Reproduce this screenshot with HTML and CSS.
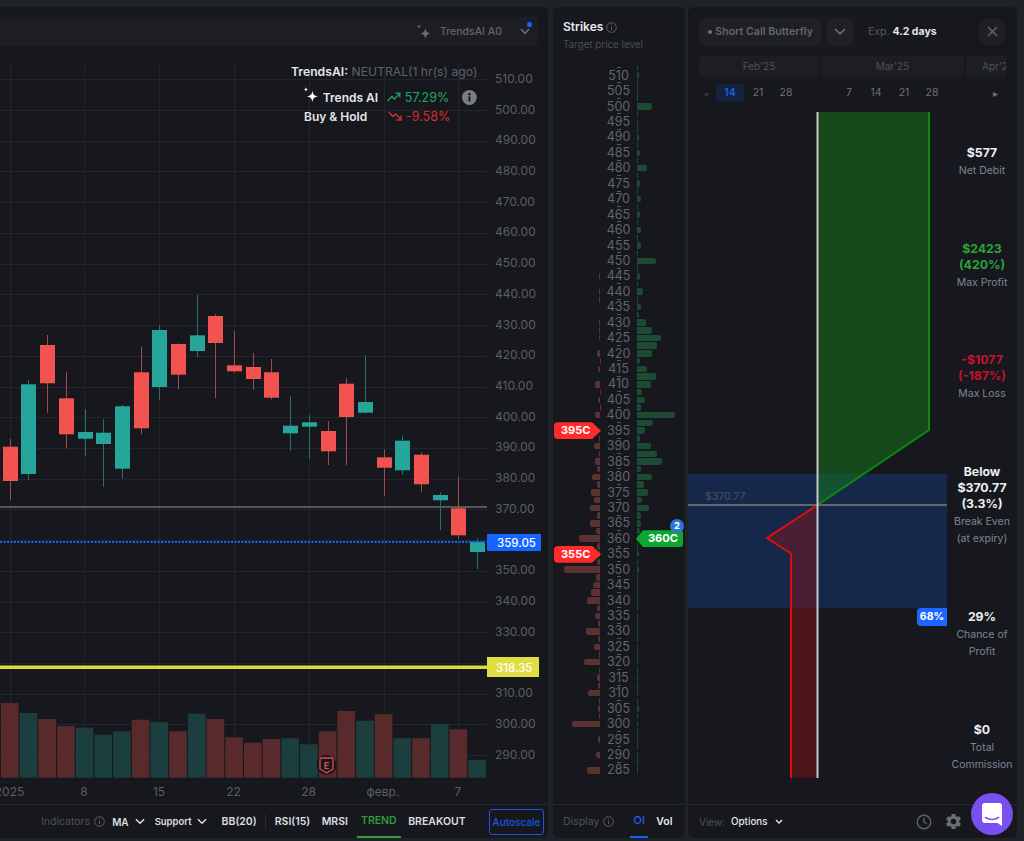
FILE: index.html
```html
<!DOCTYPE html>
<html lang="en">
<head>
    <meta charset="UTF-8">
    <meta name="viewport" content="width=device-width, initial-scale=1.0">
    <title>Options Chart</title>
    <link rel="stylesheet" href="styles.css">
</head>
<body>
    <section class="chart-panel">
        <div class="chart-top">
            <svg class="top-spark" width="16" height="16" viewBox="0 0 16 16"><path d="M9.5 3.5C10 7.5 11 9 15.5 9.5 11 10 10 11.5 9.5 15.5 9 11.5 8 10 3.5 9.5 8 9 9 7.5 9.5 3.5Z"/><path d="M3 0C3.2 1.7 3.6 2.2 5.4 2.5 3.6 2.8 3.2 3.3 3 5 2.8 3.3 2.4 2.8.6 2.5 2.4 2.2 2.8 1.7 3 0Z"/></svg>
            <span class="top-name">TrendsAI A0</span>
            <span class="top-chevron">
                <svg width="10" height="7" viewBox="0 0 10 7"><polyline points="1,1 5,5.5 9,1"/></svg>
                <i class="blue-dot"></i>
            </span>
        </div>
        <div class="chart-area">
            <svg id="chart" class="chart-svg" width="548" height="758" viewBox="0 46 548 758"></svg>
            <div class="legend">
                <p class="legend-title"><strong>TrendsAI:</strong> NEUTRAL(1 hr(s) ago)</p>
                <div class="legend-row">
                    <svg class="legend-spark" width="16" height="16" viewBox="0 0 16 16"><path d="M9.5 3.5C10 7.5 11 9 15.5 9.5 11 10 10 11.5 9.5 15.5 9 11.5 8 10 3.5 9.5 8 9 9 7.5 9.5 3.5Z"/><path d="M3 0C3.2 1.7 3.6 2.2 5.4 2.5 3.6 2.8 3.2 3.3 3 5 2.8 3.3 2.4 2.8.6 2.5 2.4 2.2 2.8 1.7 3 0Z"/></svg>
                    <span class="legend-name">Trends AI</span>
                    <svg class="legend-arrow up" width="14" height="10" viewBox="0 0 14 10"><polyline points="0.5,9 5,4.5 7.5,7 13,1.5"/><polyline points="8.5,1 13,1 13,5.5"/></svg>
                    <span class="legend-pct up">57.29%</span>
                    <svg class="legend-info" width="15" height="15" viewBox="0 0 15 15"><circle cx="7.5" cy="7.5" r="7.5" fill="#7b7d85"/><circle cx="7.5" cy="4.2" r="1.2" fill="#16181d"/><rect x="6.5" y="6.3" width="2" height="5.2" fill="#16181d"/></svg>
                </div>
                <div class="legend-row second">
                    <span class="legend-name hold">Buy &amp; Hold</span>
                    <svg class="legend-arrow down" width="14" height="10" viewBox="0 0 14 10"><polyline points="0.5,1 5,5.5 7.5,3 13,8.5"/><polyline points="8.5,9 13,9 13,4.5"/></svg>
                    <span class="legend-pct down">-9.58%</span>
                </div>
            </div>
        </div>
        <div class="chart-bottom">
            <span class="muted">Indicators</span>
            <svg class="info-line ind-info" width="11" height="11" viewBox="0 0 11 11"><circle cx="5.5" cy="5.5" r="4.8"/><line x1="5.5" y1="5" x2="5.5" y2="8.2"/><line x1="5.5" y1="2.8" x2="5.5" y2="3.8"/></svg>
            <span class="ind ind-ma">MA</span>
            <svg class="chev" width="10" height="7" viewBox="0 0 11 7"><polyline points="1,1 5.5,5.5 10,1"/></svg>
            <span class="ind ind-support">Support</span>
            <svg class="chev" width="10" height="7" viewBox="0 0 11 7"><polyline points="1,1 5.5,5.5 10,1"/></svg>
            <span class="ind ind-bb">BB(20)</span>
            <i class="ind-divider"></i>
            <span class="ind ind-rsi">RSI(15)</span>
            <span class="ind ind-mrsi">MRSI</span>
            <span class="ind ind-trend">TREND</span>
            <span class="ind ind-breakout">BREAKOUT</span>
            <button class="autoscale">Autoscale</button>
        </div>
    </section>

    <section class="strikes-panel">
        <div class="strikes-head">
            <h3>Strikes <svg class="info-line" width="11" height="11" viewBox="0 0 11 11"><circle cx="5.5" cy="5.5" r="4.8"/><line x1="5.5" y1="5" x2="5.5" y2="8.2"/><line x1="5.5" y1="2.8" x2="5.5" y2="3.8"/></svg></h3>
            <p>Target price level</p>
        </div>
        <div id="strikeList" class="strike-list"></div>
        <div class="strikes-foot">
            <span class="muted">Display</span>
            <svg class="info-line" width="11" height="11" viewBox="0 0 11 11"><circle cx="5.5" cy="5.5" r="4.8"/><line x1="5.5" y1="5" x2="5.5" y2="8.2"/><line x1="5.5" y1="2.8" x2="5.5" y2="3.8"/></svg>
            <span class="foot-oi">OI</span>
            <span class="foot-vol">Vol</span>
        </div>
    </section>

    <section class="trade-panel">
        <div class="trade-head">
            <div class="strategy-btn"><i class="strategy-dot"></i>Short Call Butterfly</div>
            <div class="chevron-btn"><svg width="12" height="8" viewBox="0 0 12 8"><polyline points="1,1 6,6 11,1"/></svg></div>
            <span class="exp-label">Exp.</span>
            <span class="exp-value">4.2 days</span>
            <div class="close-btn"><svg width="11" height="11" viewBox="0 0 11 11"><line x1="1" y1="1" x2="10" y2="10"/><line x1="10" y1="1" x2="1" y2="10"/></svg></div>
        </div>
        <div class="months">
            <div class="month feb">Feb'25</div>
            <div class="month mar">Mar'25</div>
            <div class="month apr">Apr'25</div>
        </div>
        <div class="dates">
            <span class="date-arrow">&#9666;</span>
            <span class="date active">14</span>
            <span class="date">21</span>
            <span class="date">28</span>
            <span class="date date-gap">7</span>
            <span class="date">14</span>
            <span class="date">21</span>
            <span class="date">28</span>
            <span class="date-arrow next">&#9656;</span>
        </div>
        <div class="trade-body">
            <div class="payoff">
                <svg width="259" height="666" viewBox="688 112 259 666">
                    <rect x="688" y="474" width="259" height="134" fill="#16284a"/>
                    <polygon points="817.5,505 929,430 929,112 817.5,112" fill="rgba(20,130,25,0.45)"/>
                    <polygon points="817.5,505 767,538 791,553.5 791,778 817.5,778" fill="rgba(160,16,16,0.38)"/>
                    <polyline points="817.5,505 929,430 929,112" fill="none" stroke="#0a8c0a" stroke-width="2"/>
                    <polyline points="817.5,505 767,538 791,553.5 791,778" fill="none" stroke="#e00c0c" stroke-width="2"/>
                    <line x1="688" y1="505" x2="947" y2="505" stroke="#64666e" stroke-width="2"/>
                    <line x1="817.5" y1="112" x2="817.5" y2="778" stroke="#c8c8cc" stroke-width="2"/>
                    <text x="705" y="500" class="payoff-price">$370.77</text>
                </svg>
                <span class="prob-badge">68%</span>
            </div>
            <div class="stats">
                <div class="stat"><b>$577</b><span>Net Debit</span></div>
                <div class="stat"><b class="gain">$2423<br>(420%)</b><span>Max Profit</span></div>
                <div class="stat"><b class="loss">-$1077<br>(-187%)</b><span>Max Loss</span></div>
                <div class="stat"><b>Below<br>$370.77<br>(3.3%)</b><span>Break Even<br>(at expiry)</span></div>
                <div class="stat"><b>29%</b><span>Chance of<br>Profit</span></div>
                <div class="stat"><b>$0</b><span>Total<br>Commission</span></div>
            </div>
        </div>
        <div class="trade-foot">
            <span class="muted">View:</span>
            <span class="view-value">Options</span>
            <svg class="view-chev" width="8" height="5" viewBox="0 0 8 5"><polyline points="1,1 4,4 7,1"/></svg>
            <svg class="clock" width="16" height="16" viewBox="0 0 16 16"><circle cx="8" cy="8" r="6.8"/><polyline points="8,4 8,8 11,10"/></svg>
            <svg class="gear" width="19" height="19" viewBox="0 0 24 24"><path d="M19.14 12.94c.04-.3.06-.61.06-.94 0-.32-.02-.64-.07-.94l2.03-1.58c.18-.14.23-.41.12-.61l-1.92-3.32c-.12-.22-.37-.29-.59-.22l-2.39.96c-.5-.38-1.03-.7-1.62-.94l-.36-2.54c-.04-.24-.24-.41-.48-.41h-3.84c-.24 0-.43.17-.47.41l-.36 2.54c-.59.24-1.13.57-1.62.94l-2.39-.96c-.22-.08-.47 0-.59.22L2.74 8.87c-.12.21-.08.47.12.61l2.03 1.58c-.05.3-.09.63-.09.94s.02.64.07.94l-2.03 1.58c-.18.14-.23.41-.12.61l1.92 3.32c.12.22.37.29.59.22l2.39-.96c.5.38 1.03.7 1.62.94l.36 2.54c.05.24.24.41.48.41h3.84c.24 0 .44-.17.47-.41l.36-2.54c.59-.24 1.13-.56 1.62-.94l2.39.96c.22.08.47 0 .59-.22l1.92-3.32c.12-.22.07-.47-.12-.61l-2.01-1.58zM12 15.6c-1.98 0-3.6-1.62-3.6-3.6s1.62-3.6 3.6-3.6 3.6 1.62 3.6 3.6-1.62 3.6-3.6 3.6z"/></svg>
        </div>
    </section>

    <div class="chat-launcher">
        <svg width="20" height="23" viewBox="0 0 20 23"><path d="M3 0H17A3 3 0 0 1 20 3V23L15.5 20H3A3 3 0 0 1 0 17V3A3 3 0 0 1 3 0Z" fill="#fff"/><path d="M3.5 14.5C7.5 17 12.5 17 16.5 14.5" fill="none" stroke="#7a4ff0" stroke-width="1.6" stroke-linecap="round"/></svg>
    </div>

    <script src="app.js"></script>
</body>
</html>
```
FILE: styles.css
```css
* {
    box-sizing: border-box;
}

body {
    margin: 0;
    width: 1024px;
    height: 841px;
    padding: 7px 0 3px 0;
    display: flex;
    overflow: hidden;
    background: #1f2229;
    font-family: Inter, "Liberation Sans", sans-serif;
    color: #e8e9ec;
}

p, h3 {
    margin: 0;
}

.muted {
    color: #4f525a;
    font-size: 10.5px;
}

.info-line {
    fill: none;
    stroke: #5f626a;
    stroke-width: 1;
}

/* chart */
.chart-panel {
    width: 548px;
    margin-right: 5px;
    display: flex;
    flex-direction: column;
    background: #16181d;
    border-radius: 0 6px 6px 0;
}

.chart-top {
    flex: none;
    width: 538px;
    height: 29px;
    margin-top: 10px;
    padding-right: 8px;
    display: flex;
    align-items: center;
    justify-content: flex-end;
    background: #1c1e23;
    border-radius: 0 5px 5px 0;
}

.top-spark {
    fill: #6a6d74;
    margin-right: 8px;
}

.top-name {
    color: #62656c;
    font-size: 10.5px;
    font-weight: 500;
    margin-right: 18px;
}

.top-chevron {
    position: relative;
    width: 10px;
    height: 7px;
    display: flex;
}

.top-chevron polyline {
    fill: none;
    stroke: #70737a;
    stroke-width: 1.4;
}

.blue-dot {
    position: absolute;
    top: -6px;
    right: -2px;
    width: 5px;
    height: 5px;
    border-radius: 50%;
    background: #1565ff;
}

.chart-area {
    flex: none;
    position: relative;
    height: 758px;
}

.chart-svg {
    display: block;
}

.axis-text {
    fill: #5c5f66;
    font-size: 12px;
    font-family: Inter, "Liberation Sans", sans-serif;
}

.price-tag {
    fill: #fff;
    font-size: 11.5px;
    font-weight: 500;
    font-family: Inter, "Liberation Sans", sans-serif;
}

.earn-text {
    fill: #e5484d;
    font-size: 9px;
    font-weight: 700;
    font-family: Inter, "Liberation Sans", sans-serif;
}

.legend {
    position: absolute;
    top: 17px;
    left: 291px;
    width: 186px;
}

.legend-title {
    height: 18px;
    line-height: 18px;
    font-size: 12.2px;
    color: #5f6269;
    text-align: right;
    white-space: nowrap;
}

.legend-title strong {
    color: #e6e7ea;
    font-weight: 600;
}

.legend-row {
    display: flex;
    align-items: center;
    height: 18px;
    margin-top: 7px;
    padding-left: 13px;
    position: relative;
}

.legend-row.second {
    margin-top: 1px;
}

.legend-spark {
    fill: #fff;
    margin-left: -1px;
    margin-right: 4px;
    margin-top: -4px;
}

.legend-name {
    width: 64px;
    font-size: 12px;
    font-weight: 600;
    color: #e6e7ea;
    white-space: nowrap;
}

.legend-name.hold {
    width: 83px;
}

.legend-arrow {
    fill: none;
    stroke-width: 1.3;
    margin-right: 4px;
    margin-left: 1px;
}

.legend-arrow.up {
    stroke: #1fa863;
}

.legend-arrow.down {
    stroke: #e02b2b;
}

.legend-pct {
    font-size: 12.5px;
}

.legend-pct.up {
    color: #1fa863;
}

.legend-pct.down {
    color: #d92b2b;
}

.legend-info {
    margin-left: 13px;
}

.chart-bottom {
    flex: 1;
    min-height: 0;
    padding-left: 41px;
    display: flex;
    align-items: center;
    font-size: 10.5px;
    border-top: 1px solid #262931;
}

.ind {
    font-weight: 600;
    color: #dcdee2;
    white-space: nowrap;
}

.ind-info {
    margin-left: 4px;
}

.ind-ma {
    margin-left: 7px;
    margin-right: 6px;
    font-size: 10px;
}

.ind-support {
    margin-left: 10px;
    margin-right: 5px;
    font-size: 9.5px;
}

.ind-bb {
    margin-left: 15px;
}

.chev {
    fill: none;
    stroke: #dcdee2;
    stroke-width: 1.6;
}

.ind-divider {
    width: 1px;
    height: 16px;
    margin-left: 8px;
    background: #2a2d34;
}

.ind-rsi {
    margin-left: 9px;
}

.ind-mrsi {
    margin-left: 11.5px;
}

.ind-trend {
    margin-left: 9px;
    align-self: stretch;
    padding: 0 4px;
    line-height: 31px;
    color: #35993f;
    border-bottom: 2px solid #35993f;
}

.ind-breakout {
    margin-left: 7.5px;
}

.autoscale {
    width: 55px;
    height: 26px;
    margin-left: auto;
    margin-right: 4px;
    padding: 0;
    background: transparent;
    border: 1px solid #1a55e0;
    border-radius: 3px;
    color: #1a55e0;
    font-family: inherit;
    font-size: 10px;
    font-weight: 500;
}

/* strikes */
.strikes-panel {
    width: 132px;
    margin-right: 3px;
    display: flex;
    flex-direction: column;
    background: #16181d;
    border-radius: 6px;
}

.strikes-head {
    flex: none;
    height: 57px;
    padding: 13px 0 0 10px;
}

.strikes-head h3 {
    display: flex;
    align-items: center;
    gap: 3px;
    font-size: 12px;
    line-height: 14px;
    font-weight: 600;
    color: #e8e9ec;
}

.strikes-head p {
    margin-top: 4px;
    font-size: 9.8px;
    line-height: 13px;
    color: #4a4e57;
}

.strike-list {
    flex: none;
    height: 740px;
}

.strike-row {
    display: grid;
    grid-template-columns: 47px 37px 48px;
    height: 7.72px;
    position: relative;
}

.put-cell {
    display: flex;
    justify-content: flex-end;
    align-items: center;
}

.call-cell {
    display: flex;
    align-items: center;
}

.put-bar, .call-bar {
    display: block;
    height: 6.5px;
}

.put-bar {
    background: #5a3230;
    border-radius: 2px 0 0 2px;
}

.call-bar {
    background: #1c4a33;
    border-radius: 0 2px 2px 0;
}

.strike-label {
    text-align: center;
    font-size: 12.5px;
    line-height: 7.7px;
    color: #62656c;
}

.strike-dash {
    width: 4px;
    height: 1px;
    margin: 3px auto 0;
    background: #585b62;
}

.tag {
    position: absolute;
    top: -4.6px;
    height: 17px;
    line-height: 17px;
    font-size: 11px;
    font-weight: 700;
    color: #fff;
    z-index: 2;
}

.tag.put {
    left: 1px;
    width: 47px;
    padding-left: 7px;
    background: #ff2a2a;
    border-radius: 4px 0 0 4px;
    clip-path: polygon(0 0, 38px 0, 100% 50%, 38px 100%, 0 100%);
}

.tag.call {
    left: 83px;
    width: 47px;
    padding-left: 12px;
    background: #0aa82e;
    border-radius: 0 3px 3px 0;
    clip-path: polygon(7px 0, 100% 0, 100% 100%, 7px 100%, 0 50%);
}

.tag-count {
    position: absolute;
    top: -15.5px;
    left: 117px;
    width: 14px;
    height: 14px;
    line-height: 14px;
    text-align: center;
    border-radius: 50%;
    background: #2b75d6;
    color: #fff;
    font-size: 9.5px;
    font-weight: 700;
    z-index: 3;
}

.strikes-foot {
    flex: 1;
    min-height: 0;
    display: flex;
    align-items: center;
    padding-left: 10px;
    border-top: 1px solid #262931;
}

.strikes-foot .info-line {
    margin-left: 4px;
}

.foot-oi {
    margin-left: 16px;
    width: 18px;
    align-self: stretch;
    line-height: 31px;
    text-align: center;
    font-size: 11px;
    font-weight: 500;
    color: #1f5fe8;
    border-bottom: 2px solid #1f5fe8;
}

.foot-vol {
    margin-left: 8px;
    font-size: 10.5px;
    font-weight: 600;
    color: #e8e9ec;
}

/* trade */
.trade-panel {
    width: 329px;
    display: flex;
    flex-direction: column;
    background: #16181d;
    border-radius: 6px;
}

.trade-head {
    flex: none;
    height: 29px;
    margin-top: 10px;
    padding: 0 11px;
    display: flex;
    align-items: center;
}

.strategy-btn {
    width: 123px;
    height: 28px;
    display: flex;
    align-items: center;
    padding-left: 9px;
    border-radius: 6px;
    background: #1e2025;
    color: #62656c;
    font-size: 10.7px;
    font-weight: 600;
    white-space: nowrap;
}

.strategy-dot {
    width: 4px;
    height: 4px;
    margin-right: 3px;
    border-radius: 50%;
    background: #6e7178;
}

.chevron-btn, .close-btn {
    width: 28px;
    height: 28px;
    display: flex;
    align-items: center;
    justify-content: center;
    background: #1e2025;
}

.chevron-btn {
    margin-left: 4px;
    border-radius: 6px;
}

.chevron-btn polyline {
    fill: none;
    stroke: #6f7279;
    stroke-width: 1.5;
}

.exp-label {
    margin-left: 14px;
    color: #55585f;
    font-size: 10.5px;
}

.exp-value {
    margin-left: 3px;
    font-size: 10.5px;
    font-weight: 700;
    color: #e4e6ea;
}

.close-btn {
    margin-left: auto;
    border-radius: 50%;
}

.close-btn line {
    stroke: #62656c;
    stroke-width: 1.4;
}

.months {
    flex: none;
    display: flex;
    gap: 2px;
    width: 307px;
    height: 21px;
    margin: 10px 0 0 11px;
    overflow: hidden;
}

.month {
    flex: none;
    height: 21px;
    line-height: 21px;
    text-align: center;
    font-size: 10px;
    color: #4f525a;
    background: #1c1e23;
    border-radius: 3px;
}

.month.feb {
    width: 120px;
}

.month.mar {
    width: 143px;
}

.month.apr {
    width: 60px;
    text-align: left;
    padding-left: 16px;
}

.dates {
    flex: none;
    display: flex;
    align-items: center;
    height: 18px;
    margin-top: 7px;
    padding-left: 28px;
    position: relative;
    font-size: 10.5px;
    color: #6d7077;
}

.date {
    width: 28px;
    height: 18px;
    line-height: 18px;
    text-align: center;
}

.date.active {
    background: #142240;
    color: #1f5fe8;
    font-weight: 600;
    border-radius: 3px;
}

.date-gap {
    margin-left: 36px;
    width: 26px;
}

.date-arrow {
    position: absolute;
    left: 15px;
    font-size: 10px;
    color: #33363c;
}

.date-arrow.next {
    left: 305px;
    color: #6d7077;
}

.trade-body {
    flex: none;
    display: flex;
    height: 692px;
    margin-top: 10px;
}

.payoff {
    position: relative;
    width: 259px;
}

.payoff svg {
    display: block;
}

.payoff-price {
    fill: #4f525a;
    font-size: 10.5px;
    font-family: Inter, "Liberation Sans", sans-serif;
}

.prob-badge {
    position: absolute;
    top: 496px;
    right: 0;
    width: 30px;
    height: 18px;
    line-height: 18px;
    text-align: center;
    background: #1a66ff;
    border-radius: 4px 0 0 4px;
    color: #fff;
    font-size: 10.5px;
    font-weight: 700;
}

.stats {
    width: 70px;
    padding-top: 33px;
    display: flex;
    flex-direction: column;
    gap: 61px;
    text-align: center;
}

.stat b {
    display: block;
    font-size: 12.3px;
    line-height: 16px;
    font-weight: 700;
    color: #eceef1;
}

.stat b.gain {
    color: #2ba33a;
}

.stat b.loss {
    color: #c4122f;
}

.stat span {
    display: block;
    margin-top: 1px;
    font-size: 10.5px;
    line-height: 17.5px;
    color: #7f8596;
    white-space: nowrap;
}

.trade-foot {
    flex: 1;
    min-height: 0;
    display: flex;
    align-items: center;
    padding-left: 11px;
    border-top: 1px solid #262931;
}

.trade-foot .muted {
    font-size: 10px;
}

.view-value {
    margin-left: 6px;
    font-size: 9.8px;
    font-weight: 500;
    color: #e4e6ea;
}

.view-chev {
    margin-left: 7px;
    fill: none;
    stroke: #e4e6ea;
    stroke-width: 1.4;
}

.clock {
    margin-left: 133px;
    fill: none;
    stroke: #5f626a;
    stroke-width: 1.4;
}

.gear {
    margin-left: 12px;
    fill: #6a6d74;
}

.chat-launcher {
    position: fixed;
    left: 971px;
    top: 793px;
    width: 42px;
    height: 42px;
    display: flex;
    align-items: center;
    justify-content: center;
    border-radius: 50%;
    background: #7a4ff0;
}
```
FILE: app.js
```js
const NS = "http://www.w3.org/2000/svg";
const chart = document.getElementById("chart");

function add(tag, attrs, text) {
    const el = document.createElementNS(NS, tag);
    for (const k in attrs) el.setAttribute(k, attrs[k]);
    if (text) el.textContent = text;
    chart.appendChild(el);
    return el;
}

function priceY(p) {
    return 79.3 + (510 - p) * 3.072;
}

// grid
for (let p = 510; p >= 290; p -= 10) {
    const y = Math.round(priceY(p)) + 0.5;
    add("line", { x1: 0, x2: 487, y1: y, y2: y, stroke: "#22252b" });
    if (p !== 360 && p !== 320) {
        add("text", { x: 495, y: priceY(p) + 3.5, class: "axis-text" }, p.toFixed(2));
    }
}
[10, 84, 159, 234, 309, 384, 458].forEach(x => {
    add("line", { x1: x + 0.5, x2: x + 0.5, y1: 63, y2: 778, stroke: "#22252b" });
});

// volume: top y, r or g
const volumes = [703, 713, 719, 726, 727.7, 734.7, 731.3, 719.7, 722.3, 731.3, 713.7, 719, 737.3,
    742.7, 739, 738.3, 744.3, 731.3, 711, 720.7, 714.3, 738.3, 738.3, 724, 729.3, 760];

// candles: wick top, body top, body bottom, wick bottom, color
const candles = [
    [439, 446.7, 481, 500, "r"], [380, 384.3, 474, 480, "g"], [335, 345, 383.3, 412.7, "r"],
    [372.3, 398.3, 434.3, 448.7, "r"], [409, 432, 438.7, 456, "g"], [419, 432.7, 444, 487, "g"],
    [404.7, 406.3, 468.7, 478.7, "g"], [346.7, 372.3, 428.3, 434.3, "r"], [325, 330, 387, 400, "g"],
    [343.3, 344, 374.7, 389.3, "r"], [295, 335.3, 351, 357.3, "g"], [314.3, 316, 343, 398.3, "r"],
    [331, 365.3, 371.3, 372.7, "r"], [353, 367, 379, 389.7, "r"], [359, 372.3, 397.7, 399.3, "r"],
    [396, 425.7, 433.3, 451, "g"], [415, 422.3, 426.7, 459, "g"], [421, 431, 451.3, 465, "r"],
    [378, 383.7, 417, 465, "r"], [355.3, 402, 412.7, 413.7, "g"], [449.3, 457.3, 467.7, 495.7, "r"],
    [435.3, 440.7, 470.3, 474.7, "g"], [452.3, 454.7, 484.3, 492.3, "r"], [492.3, 495, 500.3, 530, "g"],
    [476.7, 508.3, 535.3, 538.7, "r"], [538.3, 541.7, 552, 569.3, "g"]
];

candles.forEach((c, i) => {
    const x = 9.8 + 18.69 * i;
    add("rect", {
        x: x - 8.8, y: volumes[i], width: 17.6, height: 777.7 - volumes[i],
        fill: c[4] === "r" ? "#592a2c" : "#1b3f3e"
    });
});

// earnings marker
add("circle", { cx: 326.5, cy: 765, r: 10, fill: "#16181d" });
add("path", {
    d: "M320 759.5Q320 758 321.5 758H331.5Q333 758 333 759.5V769L326.5 773L320 769Z",
    fill: "none", stroke: "#e5484d", "stroke-width": 1.3
});
add("text", { x: 326.5, y: 769, "text-anchor": "middle", class: "earn-text" }, "E");

// key levels under candles
add("line", { x1: 0, x2: 487, y1: 507, y2: 507, stroke: "#56575b", "stroke-width": 2 });

candles.forEach((c, i) => {
    const x = Math.round(9.8 + 18.69 * i) + 0.5;
    const up = c[4] === "g";
    add("line", { x1: x, x2: x, y1: c[0], y2: c[3], stroke: up ? "#1d756c" : "#a8474a" });
    add("rect", {
        x: x - 7.5, y: c[1], width: 15, height: c[2] - c[1],
        fill: up ? "#26a69a" : "#f05350"
    });
});

add("line", { x1: 0, x2: 487, y1: 542, y2: 542, stroke: "#1565ff", "stroke-width": 2, "stroke-dasharray": "2 1.5" });
add("rect", { x: 487, y: 534, width: 54, height: 17, rx: 1, fill: "#1565ff" });
add("text", { x: 497, y: 547, class: "price-tag" }, "359.05");

add("rect", { x: 0, y: 665.5, width: 487, height: 3.5, fill: "#dcd93f" });
add("rect", { x: 487, y: 657, width: 52, height: 20, fill: "#e0dd45" });
add("text", { x: 496, y: 671.5, class: "price-tag" }, "318.35");

// dates
[["2025", 9.5], ["8", 84], ["15", 159], ["22", 233.5], ["28", 308.5], ["февр.", 383], ["7", 458]].forEach(d => {
    add("text", { x: d[1], y: 796, "text-anchor": "middle", class: "axis-text" }, d[0]);
});

// strikes: open interest per 2.5 step, from 512.5 down to 285
const callOi = [1, 2, 0.7, 1, 0.7, 14.5, 0.7, 1, 0.7, 2, 0.7, 3, 0.7, 10, 0.7, 3, 0.7, 4, 0.7, 2.5, 0.7, 4,
    0.7, 3.5, 0.7, 18.5, 0.7, 3, 0.7, 6, 1, 4, 1.5, 9, 15, 24, 20, 15, 3, 10, 19, 13.5, 5, 8, 4, 38, 16, 8,
    3, 14, 20, 25, 4, 15, 7, 11, 5, 12, 4, 4, 3, 3, 1, 2, 1, 2, 0.5, 0.5, 0.5, 0.5, 0.5, 0.5, 0.5, 0.5, 0.5,
    1, 0.5, 0.5, 0.5, 0.5, 0.5, 0.5, 0.5, 2, 0.3, 0.5, 0.3, 0.5, 0.3, 0.5, 0.3, 0.5];
const putOi = [0, 0, 0, 0, 0, 0, 0, 0, 0, 0, 0, 0, 0, 0, 0, 0, 0, 0, 0, 0, 0, 0, 0, 0, 0, 0, 0, 1, 0, 1.5, 1,
    0, 0, 1, 1, 1.5, 0, 3, 0.5, 2, 0, 5, 0.5, 2, 0.5, 5, 0, 0, 1, 6, 1, 5, 3, 8, 3, 9, 6, 10, 3, 10, 4, 21,
    3, 3, 3, 36, 4, 7, 9, 13, 3, 5, 2.5, 14, 2.5, 6, 1.5, 16, 1, 3.5, 2, 12, 1, 2.5, 1, 28, 0, 2, 0, 4, 0, 13];

const tags = {
    395: ["put", "395C"],
    355: ["put", "355C"],
    360: ["call", "360C"]
};

const list = document.getElementById("strikeList");

callOi.forEach((call, i) => {
    const strike = 512.5 - i * 2.5;
    const row = document.createElement("div");
    row.className = "strike-row";

    const label = Number.isInteger(strike)
        ? `<div class="strike-label">${strike}</div>`
        : `<div class="strike-label"><div class="strike-dash"></div></div>`;

    row.innerHTML =
        `<div class="put-cell"><span class="put-bar" style="width:${putOi[i]}px"></span></div>` +
        label +
        `<div class="call-cell"><span class="call-bar" style="width:${call}px"></span></div>`;

    if (tags[strike]) {
        const tag = document.createElement("div");
        tag.className = "tag " + tags[strike][0];
        tag.textContent = tags[strike][1];
        row.appendChild(tag);
        if (tags[strike][0] === "call") {
            const count = document.createElement("div");
            count.className = "tag-count";
            count.textContent = "2";
            row.appendChild(count);
        }
    }
    list.appendChild(row);
});
```
